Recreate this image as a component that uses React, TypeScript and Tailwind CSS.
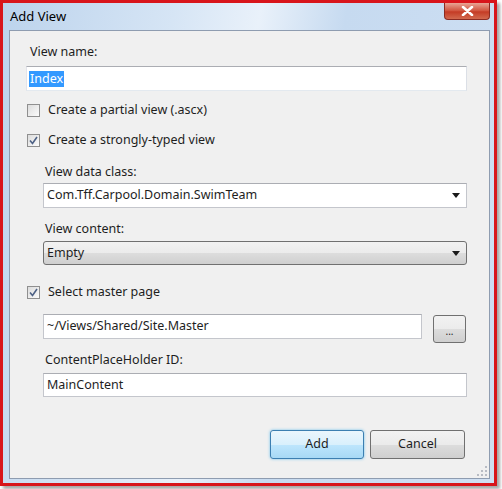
import React from "react";

const Check = ({ checked }: { checked?: boolean }) => (
  <span className="relative w-[13px] h-[13px] border border-[#8f8f8f] bg-[linear-gradient(135deg,#dcdcdc,#fbfbfb)] flex items-center justify-center shrink-0">
    {checked && (
      <svg width="9" height="9" viewBox="0 0 9 9">
        <path d="M1 4.5 L3.5 7.5 L8 1" fill="none" stroke="#4d6185" strokeWidth="1.6" />
      </svg>
    )}
  </span>
);

const Arrow = () => (
  <svg width="8" height="5" viewBox="0 0 8 5" className="shrink-0">
    <path d="M0 0 H8 L4 5 Z" fill="#1a1a1a" />
  </svg>
);

export default function App() {
  return (
    <div className="w-[502px] h-[489px] bg-white" style={{ fontFamily: '"Noto Sans", "Open Sans", sans-serif' }}>
      <div className="relative w-[497px] h-[486px] border-[3px] border-[#d8151b] bg-[linear-gradient(100deg,#bcd3ec_0%,#d6e5f5_30%,#e9f1fa_45%,#c6daf0_60%,#cfe0f3_100%)] shadow-[3px_3px_3px_rgba(0,0,0,0.35)]">
        {/* title bar */}
        <div className="h-[27px] pl-[7px] pt-[4px] text-[13px] text-black leading-[18px]">Add View</div>
        <div className="absolute top-0 right-[4px] w-[46px] h-[17px] rounded-b-[4px] border border-t-0 border-[#8b2b22] bg-[linear-gradient(#e8a595,#d0523c_50%,#c43b25_55%,#d2694e)] flex items-center justify-center">
          <svg width="13" height="10" viewBox="0 0 13 10">
            <path d="M2 1 L11 9 M11 1 L2 9" stroke="#fff" strokeWidth="2.6" strokeLinecap="round" />
          </svg>
        </div>

        {/* client area */}
        <div className="relative ml-[6px] w-[481px] h-[449px] border border-[#8e9cb0] bg-[#f0f0f0] pl-[16px] pr-[22px] text-[12.5px] text-[#1e1e1e]">
          <div className="mt-[13px] ml-[4px] h-[16px] leading-[16px]">View name:</div>
          <div className="mt-[6px] h-[25px] border border-[#abadb3] border-l-[#e2e3ea] border-r-[#dbdfe6] border-b-[#e3e9ef] bg-white flex items-center pl-[2px]">
            <span className="bg-[#3399ff] text-white px-[1px] leading-[16px]">Index</span>
          </div>

          <div className="mt-[11px] ml-[1px] h-[16px] flex items-center gap-[8px]">
            <Check />
            <span className="leading-[16px]">Create a partial view (.ascx)</span>
          </div>
          <div className="mt-[14px] ml-[1px] h-[16px] flex items-center gap-[8px]">
            <Check checked />
            <span className="leading-[16px]">Create a strongly-typed view</span>
          </div>

          <div className="pl-[17px]">
            <div className="mt-[16px] ml-[2px] h-[16px] leading-[16px]">View data class:</div>
            <div className="mt-[3px] h-[25px] border border-[#c4c6cc] border-t-[#abadb3] bg-white flex items-center justify-between pl-[3px] pr-[6px]">
              <span>Com.Tff.Carpool.Domain.SwimTeam</span>
              <Arrow />
            </div>
            <div className="mt-[13px] ml-[2px] h-[16px] leading-[16px]">View content:</div>
            <div className="mt-[4px] h-[24px] rounded-[3px] border border-[#707070] bg-[linear-gradient(#f2f2f2,#ebebeb_50%,#dddddd_50%,#cfcfcf)] flex items-center justify-between pl-[3px] pr-[6px]">
              <span>Empty</span>
              <Arrow />
            </div>
          </div>

          <div className="mt-[19px] ml-[1px] h-[16px] flex items-center gap-[8px]">
            <Check checked />
            <span className="leading-[16px]">Select master page</span>
          </div>

          <div className="pl-[17px]">
            <div className="mt-[14px] flex items-start gap-[11px]">
              <div className="w-[379px] h-[25px] border border-[#c4c6cc] border-t-[#abadb3] bg-white flex items-center pl-[3px]">
                ~/Views/Shared/Site.Master
              </div>
              <div className="mt-[1px] w-[33px] h-[28px] rounded-[3px] border border-[#707070] bg-[linear-gradient(#f2f2f2,#ebebeb_50%,#dddddd_50%,#cfcfcf)] flex items-end justify-center pb-[6px] text-[10px] leading-none">
                ...
              </div>
            </div>
            <div className="mt-[9px] ml-[2px] h-[16px] leading-[16px]">ContentPlaceHolder ID:</div>
            <div className="mt-[5px] h-[24px] border border-[#c4c6cc] border-t-[#abadb3] bg-white flex items-center pl-[3px]">
              MainContent
            </div>
          </div>

          <div className="mt-[33px] mr-[2px] flex justify-end gap-[6px]">
            <button className="w-[94px] h-[29px] rounded-[3px] border border-[#3c7fb1] bg-[linear-gradient(#eaf6fd,#d9f0fc_50%,#bee6fd_50%,#a7d9f5)] shadow-[0_0_3px_#6fc1ec] text-[12.5px]">
              Add
            </button>
            <button className="w-[95px] h-[29px] rounded-[3px] border border-[#707070] bg-[linear-gradient(#f2f2f2,#ebebeb_50%,#dddddd_50%,#cfcfcf)] text-[12.5px]">
              Cancel
            </button>
          </div>

          <svg className="absolute right-[2px] bottom-[2px]" width="10" height="10" viewBox="0 0 10 10">
            <g fill="#b8bcc4">
              <rect x="8" y="0" width="2" height="2" />
              <rect x="4" y="4" width="2" height="2" />
              <rect x="8" y="4" width="2" height="2" />
              <rect x="0" y="8" width="2" height="2" />
              <rect x="4" y="8" width="2" height="2" />
              <rect x="8" y="8" width="2" height="2" />
            </g>
          </svg>
        </div>
      </div>
    </div>
  );
}
